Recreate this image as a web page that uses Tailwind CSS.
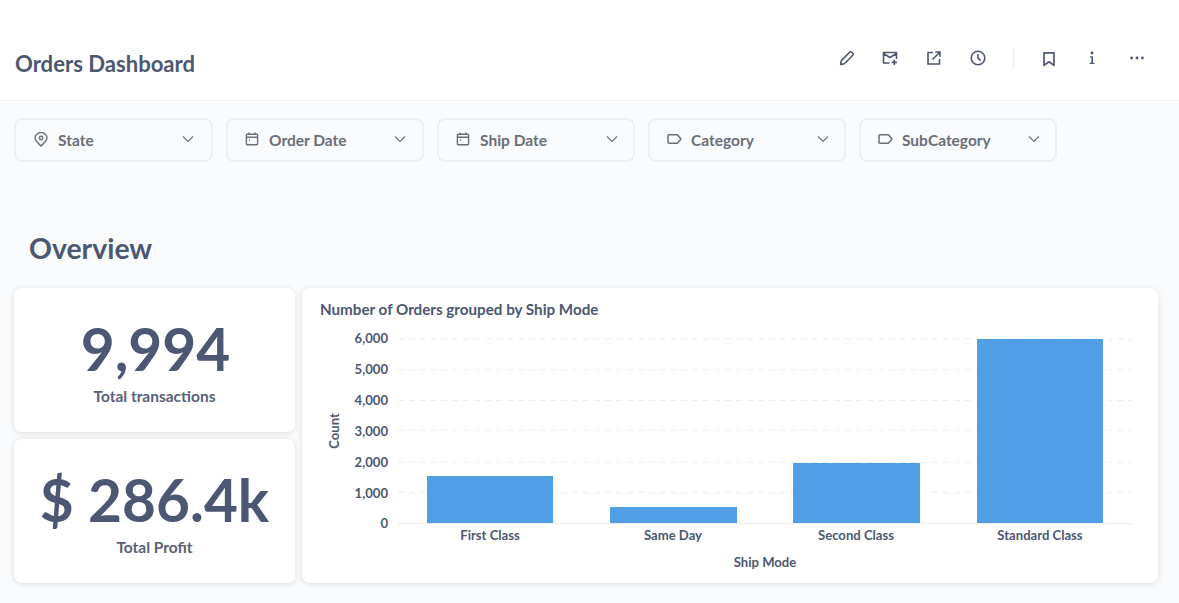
<!DOCTYPE html>
<html lang="en">
<head>
    <meta charset="UTF-8">
    <meta name="viewport" content="width=device-width, initial-scale=1.0">
    <title>Orders Dashboard</title>
    <script src="https://cdn.jsdelivr.net/npm/@tailwindcss/browser@4"></script>
</head>
<body class="bg-[#f9fbfd] text-[#4c5773] font-['Lato','Noto_Sans',sans-serif] h-[603px] w-[1179px] overflow-hidden">
    <!-- Header -->
    <header class="h-[101px] bg-white border-b border-[#eceef1] flex items-start justify-between pl-[15px]">
        <h1 class="mt-[50px] text-[22.1px] leading-[28px] font-bold">Orders Dashboard</h1>
        <div class="flex items-center mt-[47px] pr-[34px] text-[#4c5773]">
            <svg class="w-4 h-4" viewBox="0 0 16 16" fill="none" stroke="currentColor" stroke-width="1.6" stroke-linejoin="round"><path d="M1.6 14.4l.7-3.8L10.7 2.2a1.4 1.4 0 0 1 2 0l1.1 1.1a1.4 1.4 0 0 1 0 2L5.4 13.7z"/></svg>
            <svg class="w-4 h-4 ml-[27px]" viewBox="0 0 16 16" fill="none" stroke="currentColor" stroke-width="1.6" stroke-linejoin="round"><path d="M7.5 13H1.5V2.5h13v6.5M1.5 3.5L8 7.5l6.5-4"/><path d="M12.3 9.8v5.2M9.7 12.4h5.2"/></svg>
            <svg class="w-4 h-4 ml-[28px]" viewBox="0 0 16 16" fill="none" stroke="currentColor" stroke-width="1.6"><path d="M7 2.5H2v11.5h11.5V9"/><path d="M6.5 9.5L13.5 2.5M9.3 2h4.7v4.7"/></svg>
            <svg class="w-4 h-4 ml-[28px]" viewBox="0 0 16 16" fill="none" stroke="currentColor" stroke-width="1.6"><circle cx="8" cy="8" r="6.8"/><path d="M8 4v4.2l2.6 2.4"/></svg>
            <div class="w-px h-[22px] bg-[#eceef1] ml-[27px]"></div>
            <svg class="w-4 h-4 ml-[27px] mt-[2px]" viewBox="0 0 16 16" fill="none" stroke="currentColor" stroke-width="1.7" stroke-linejoin="round"><path d="M3 1.8h10v12.6l-5-3.6-5 3.6z"/></svg>
            <svg class="w-4 h-4 ml-[27px]" viewBox="0 0 16 16" fill="currentColor"><circle cx="8" cy="3" r="1.4"/><path d="M6 6.2h3v6.6h1.4V14H5.6v-1.2H7.4V7.4H6z"/></svg>
            <svg class="w-4 h-4 ml-[29px]" viewBox="0 0 16 16" fill="currentColor"><circle cx="2.6" cy="8" r="1.4"/><circle cx="8" cy="8" r="1.4"/><circle cx="13.4" cy="8" r="1.4"/></svg>
        </div>
    </header>

    <!-- Filters -->
    <div class="flex gap-[13px] pl-[14px] pt-[17px] text-[#696e7b]">
        <div class="w-[199px] h-[44px] rounded-lg border-2 border-[#eeeff2] flex items-center pl-[18px] pr-[17px]">
            <svg class="w-[14px] h-[15px] shrink-0 -mt-px" viewBox="0 0 14 15" fill="none" stroke="currentColor" stroke-width="1.4"><path d="M7 14C4.2 11 1 9 1 6a6 5.4 0 0 1 12 0c0 3-3.2 5-6 8z"/><circle cx="7" cy="6" r="1.7"/></svg>
            <span class="ml-[10px] mt-px text-[15.5px] font-bold">State</span>
            <svg class="w-3 h-3 ml-auto -mt-[3px]" viewBox="0 0 12 12" fill="none" stroke="currentColor" stroke-width="1.1"><path d="M1 3.5l5 5 5-5"/></svg>
        </div>
        <div class="w-[198px] h-[44px] rounded-lg border-2 border-[#eeeff2] flex items-center pl-[17px] pr-[16px]">
            <svg class="w-[14px] h-[14px] shrink-0 -mt-[3px]" viewBox="0 0 14 14" fill="none" stroke="currentColor" stroke-width="1.4"><rect x="1.4" y="2.2" width="11.2" height="10.6" rx="1"/><path d="M1.4 5.2h11.2M4 .6v2.4M10 .6v2.4M4 8h1"/></svg>
            <span class="ml-[10px] mt-px text-[15.5px] font-bold">Order Date</span>
            <svg class="w-3 h-3 ml-auto -mt-[3px]" viewBox="0 0 12 12" fill="none" stroke="currentColor" stroke-width="1.1"><path d="M1 3.5l5 5 5-5"/></svg>
        </div>
        <div class="w-[198px] h-[44px] rounded-lg border-2 border-[#eeeff2] flex items-center pl-[17px] pr-[15px]">
            <svg class="w-[14px] h-[14px] shrink-0 -mt-[3px]" viewBox="0 0 14 14" fill="none" stroke="currentColor" stroke-width="1.4"><rect x="1.4" y="2.2" width="11.2" height="10.6" rx="1"/><path d="M1.4 5.2h11.2M4 .6v2.4M10 .6v2.4M4 8h1"/></svg>
            <span class="ml-[10px] mt-px text-[15.5px] font-bold">Ship Date</span>
            <svg class="w-3 h-3 ml-auto -mt-[3px]" viewBox="0 0 12 12" fill="none" stroke="currentColor" stroke-width="1.1"><path d="M1 3.5l5 5 5-5"/></svg>
        </div>
        <div class="w-[198px] h-[44px] rounded-lg border-2 border-[#eeeff2] flex items-center pl-[17px] pr-[15px]">
            <svg class="w-[15px] h-[14px] shrink-0 -mt-[2px]" viewBox="0 0 15 14" fill="none" stroke="currentColor" stroke-width="1.5" stroke-linejoin="round"><path d="M2 2.8h8.4l3.6 4.2-3.6 4.2H2a1 1 0 0 1-1-1V3.8a1 1 0 0 1 1-1z"/></svg>
            <span class="ml-[9px] mt-px text-[15.5px] font-bold">Category</span>
            <svg class="w-3 h-3 ml-auto -mt-[3px]" viewBox="0 0 12 12" fill="none" stroke="currentColor" stroke-width="1.1"><path d="M1 3.5l5 5 5-5"/></svg>
        </div>
        <div class="w-[198px] h-[44px] rounded-lg border-2 border-[#eeeff2] flex items-center pl-[17px] pr-[15px]">
            <svg class="w-[15px] h-[14px] shrink-0 -mt-[2px]" viewBox="0 0 15 14" fill="none" stroke="currentColor" stroke-width="1.5" stroke-linejoin="round"><path d="M2 2.8h8.4l3.6 4.2-3.6 4.2H2a1 1 0 0 1-1-1V3.8a1 1 0 0 1 1-1z"/></svg>
            <span class="ml-[9px] mt-px text-[15.5px] font-bold">SubCategory</span>
            <svg class="w-3 h-3 ml-auto -mt-[3px]" viewBox="0 0 12 12" fill="none" stroke="currentColor" stroke-width="1.1"><path d="M1 3.5l5 5 5-5"/></svg>
        </div>
    </div>

    <h2 class="ml-[29px] mt-[68px] text-[28.4px] leading-[36px] font-bold">Overview</h2>

    <!-- Cards -->
    <div class="flex gap-[7px] pl-[14px] mt-[22px]">
        <div class="w-[281px] flex flex-col gap-[7px]">
            <div class="h-[144px] bg-white rounded-lg shadow-[0_1px_6px_rgba(0,0,0,0.12)] flex flex-col items-center pt-[27px]">
                <div class="text-[58.6px] leading-[66px] font-bold pl-[2px]">9,994</div>
                <div class="text-[15.5px] leading-[20px] font-bold mt-[5px] text-[#596178]">Total transactions</div>
            </div>
            <div class="h-[144px] bg-white rounded-lg shadow-[0_1px_6px_rgba(0,0,0,0.12)] flex flex-col items-center pt-[27px]">
                <div class="text-[58.6px] leading-[66px] font-bold">$ 286.4k</div>
                <div class="text-[15.5px] leading-[20px] font-bold mt-[5px] text-[#596178]">Total Profit</div>
            </div>
        </div>

        <div class="w-[856px] h-[295px] bg-white rounded-lg shadow-[0_1px_6px_rgba(0,0,0,0.12)]">
            <div class="pl-[18px] pt-[11px] text-[15.2px] leading-[20px] font-bold">Number of Orders grouped by Ship Mode</div>
            <!-- coordinates below are offset from the card's top left (302,288) -->
            <svg class="block -mt-[31px]" width="856" height="295" viewBox="0 0 856 295" font-family="Lato" font-weight="700" font-size="13.1" fill="#4c5773">
                <g stroke="#eceef1" stroke-width="1" stroke-dasharray="6 4.9">
                    <path d="M96 51H830"/>
                    <path d="M96 81.5H830"/>
                    <path d="M96 112.5H830"/>
                    <path d="M96 142.5H830"/>
                    <path d="M96 174.5H830"/>
                    <path d="M96 204.5H830"/>
                </g>
                <path d="M96 235.5H830" stroke="#eceef1"/>
                <rect x="125" y="188" width="126" height="47" fill="#509ee3"/>
                <rect x="308" y="219" width="127" height="16" fill="#509ee3"/>
                <rect x="491" y="175" width="127" height="60" fill="#509ee3"/>
                <rect x="675" y="51" width="126" height="184" fill="#509ee3"/>
                <g text-anchor="end">
                    <text x="86" y="55">6,000</text>
                    <text x="86" y="86">5,000</text>
                    <text x="86" y="117">4,000</text>
                    <text x="86" y="148">3,000</text>
                    <text x="86" y="179">2,000</text>
                    <text x="86" y="210">1,000</text>
                    <text x="86" y="240">0</text>
                </g>
                <g text-anchor="middle">
                    <text x="188" y="252">First Class</text>
                    <text x="371" y="252">Same Day</text>
                    <text x="554" y="252">Second Class</text>
                    <text x="738" y="252">Standard Class</text>
                    <text x="463" y="279">Ship Mode</text>
                    <text transform="translate(37 143) rotate(-90)">Count</text>
                </g>
            </svg>
        </div>
    </div>
</body>
</html>
